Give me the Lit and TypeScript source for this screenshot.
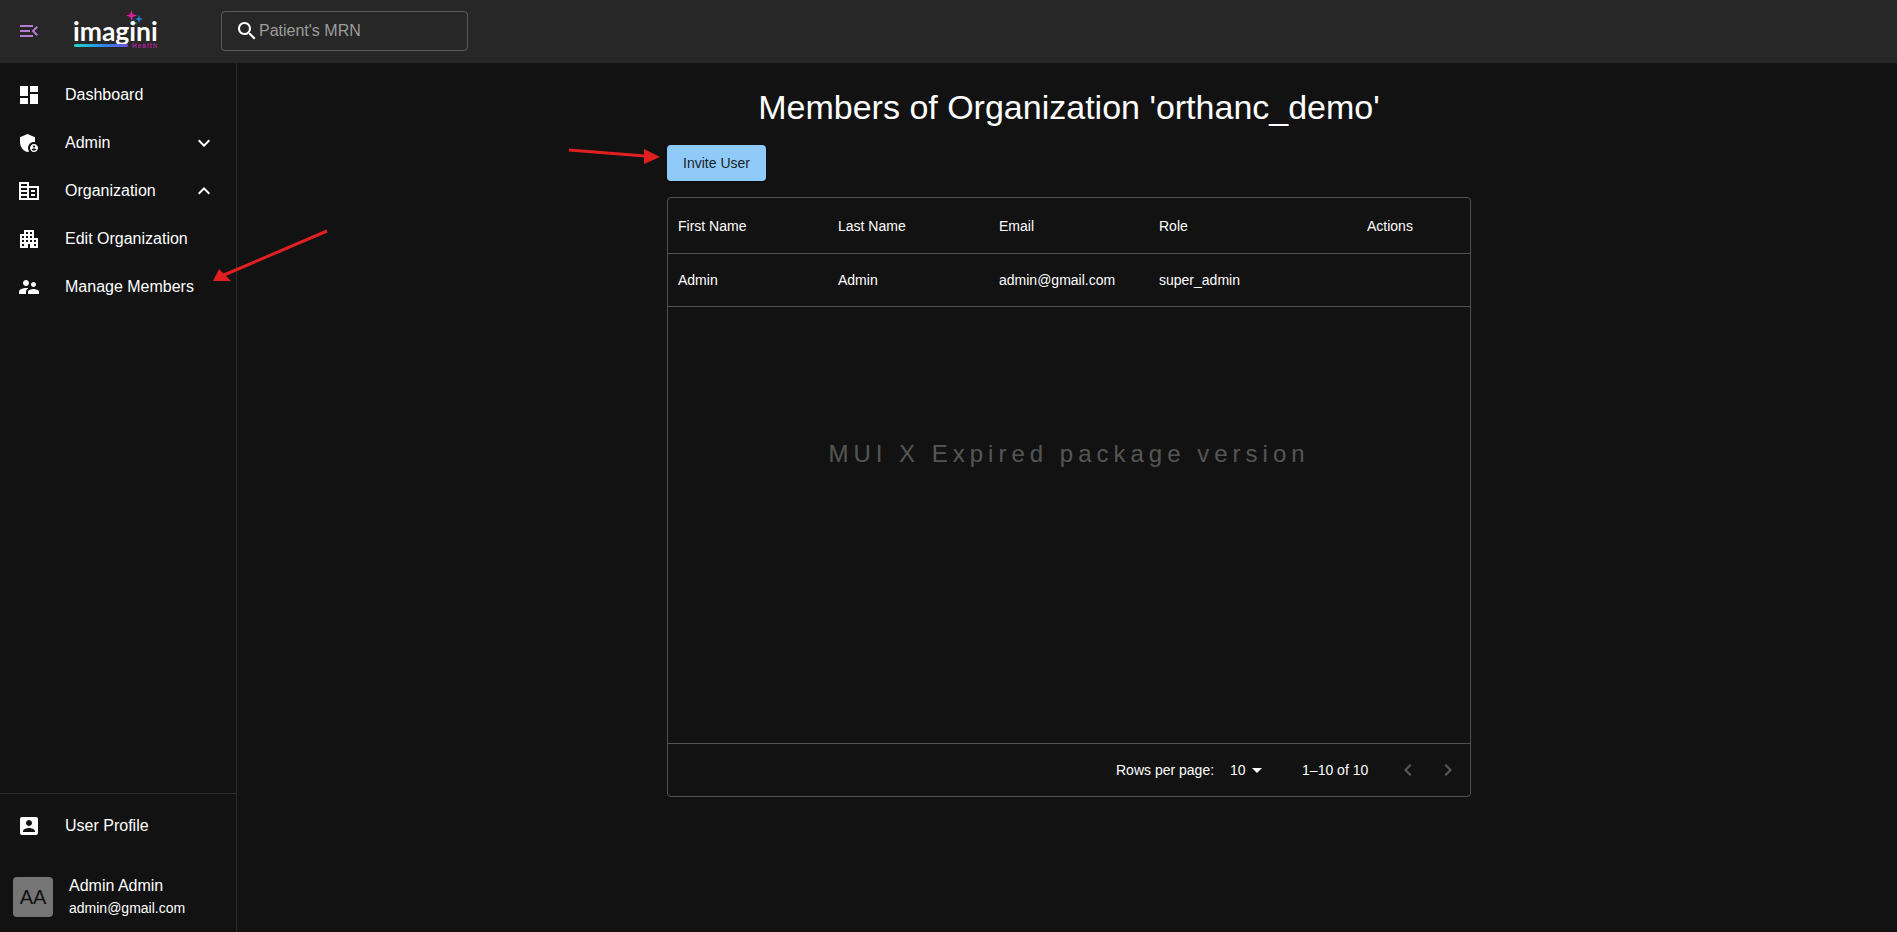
import { LitElement, html, css, svg } from 'lit';
import { customElement } from 'lit/decorators.js';

const ICONS: Record<string, string> = {
  menuOpen: 'M3 18h13v-2H3v2zm0-5h10v-2H3v2zm0-7v2h13V6H3zm18 9.59L17.42 12 21 8.41 19.59 7l-5 5 5 5L21 15.59z',
  search: 'M15.5 14h-.79l-.28-.27C15.41 12.59 16 11.11 16 9.5 16 5.91 13.09 3 9.5 3S3 5.91 3 9.5 5.91 16 9.5 16c1.61 0 3.09-.59 4.23-1.57l.27.28v.79l5 4.99L20.49 19l-4.99-5zm-6 0C7.01 14 5 11.99 5 9.5S7.01 5 9.5 5 14 7.01 14 9.5 11.99 14 9.5 14z',
  dashboard: 'M3 13h8V3H3v10zm0 8h8v-6H3v6zm10 0h8V11h-8v10zm0-18v6h8V3h-8z',
  admin: 'M17 11c.34 0 .67.04 1 .09V6.27L10.5 3 3 6.27v4.91c0 4.54 3.2 8.79 7.5 9.82.55-.13 1.08-.32 1.6-.55-.69-.98-1.1-2.17-1.1-3.45 0-3.31 2.69-6 6-6zM17 13c-2.21 0-4 1.79-4 4s1.79 4 4 4 4-1.79 4-4-1.79-4-4-4zm0 1.38c.62 0 1.12.51 1.12 1.12s-.51 1.12-1.12 1.12-1.12-.51-1.12-1.12.5-1.12 1.12-1.12zm0 5.37c-.93 0-1.74-.46-2.24-1.17.05-.72 1.51-1.08 2.24-1.08s2.19.36 2.24 1.08c-.5.71-1.31 1.17-2.24 1.17z',
  corporate: 'M12 7V3H2v18h20V7H12zm-2 12H4v-2h6v2zm0-4H4v-2h6v2zm0-4H4V9h6v2zm0-4H4V5h6v2zm10 12h-8V9h8v10zm-2-8h-4v2h4v-2zm0 4h-4v2h4v-2z',
  apartment: 'M17 11V3H7v4H3v14h8v-4h2v4h8V11h-4zM7 19H5v-2h2v2zm0-4H5v-2h2v2zm0-4H5V9h2v2zm4 4H9v-2h2v2zm0-4H9V9h2v2zm0-4H9V5h2v2zm4 8h-2v-2h2v2zm0-4h-2V9h2v2zm0-4h-2V5h2v2zm4 12h-2v-2h2v2zm0-4h-2v-2h2v2z',
  supervisor: 'M16.5 12c1.38 0 2.49-1.12 2.49-2.5S17.88 7 16.5 7C15.12 7 14 8.12 14 9.5s1.12 2.5 2.5 2.5zM9 11c1.66 0 2.99-1.34 2.99-3S10.66 5 9 5C7.34 5 6 6.34 6 8s1.34 3 3 3zm7.5 3c-1.83 0-5.5.92-5.5 2.75V19h11v-2.25c0-1.83-3.67-2.75-5.5-2.75zM9 13c-2.33 0-7 1.17-7 3.5V19h7v-2.25c0-.85.33-2.34 2.37-3.47C10.5 13.1 9.66 13 9 13z',
  accountBox: 'M3 5v14c0 1.1.89 2 2 2h14c1.1 0 2-.9 2-2V5c0-1.1-.9-2-2-2H5c-1.11 0-2 .9-2 2zm12 4c0 1.66-1.34 3-3 3s-3-1.34-3-3 1.34-3 3-3 3 1.34 3 3zm-9 8c0-2 4-3.1 6-3.1s6 1.1 6 3.1v1H6v-1z',
  expandMore: 'M16.59 8.59 12 13.17 7.41 8.59 6 10l6 6 6-6z',
  expandLess: 'm12 8-6 6 1.41 1.41L12 10.83l4.59 4.58L18 14z',
  chevronLeft: 'M15.41 7.41 14 6l-6 6 6 6 1.41-1.41L10.83 12z',
  chevronRight: 'M10 6 8.59 7.41 13.17 12l-4.58 4.59L10 18l6-6z',
  dropDown: 'm7 10 5 5 5-5z',
};

const icon = (name: string, cls = '') =>
  html`<svg class="icon ${cls}" viewBox="0 0 24 24"><path d=${ICONS[name]}></path></svg>`;

const star = (x: number, y: number, r: number, fill: string) => {
  const k = r * 0.25;
  const d = `M${x} ${y - r}L${x + k} ${y - k}L${x + r} ${y}L${x + k} ${y + k}L${x} ${y + r}L${x - k} ${y + k}L${x - r} ${y}L${x - k} ${y - k}Z`;
  return svg`<path d=${d} fill=${fill}></path>`;
};

const NAV = [
  { label: 'Dashboard', icon: 'dashboard' },
  { label: 'Admin', icon: 'admin', chevron: 'expandMore' },
  { label: 'Organization', icon: 'corporate', chevron: 'expandLess' },
  { label: 'Edit Organization', icon: 'apartment' },
  { label: 'Manage Members', icon: 'supervisor' },
];

const COLUMNS = ['First Name', 'Last Name', 'Email', 'Role', 'Actions'];
const ROW = ['Admin', 'Admin', 'admin@gmail.com', 'super_admin', ''];

@customElement('app-root')
export class AppRoot extends LitElement {
  static styles = css`
    :host {
      display: flex;
      flex-direction: column;
      position: relative;
      height: 932px;
      overflow: hidden;
      background: #121212;
      color: #fff;
      font-family: 'Liberation Sans', Arial, sans-serif;
    }
    .icon {
      width: 24px;
      height: 24px;
      fill: currentColor;
      flex: none;
      display: block;
    }

    .topbar {
      height: 63px;
      flex: none;
      box-sizing: border-box;
      display: flex;
      align-items: center;
      padding: 0 0 1px 17px;
      background: #272727;
    }
    .menu-btn {
      color: #b57bd1;
    }
    .logo {
      position: relative;
      width: 148px;
      margin-left: 32px;
      height: 40px;
      flex: none;
    }
    .logo-text {
      position: absolute;
      left: 0;
      top: 9px;
      font-family: Lato, 'Noto Sans', sans-serif;
      font-weight: 700;
      font-size: 26.5px;
      line-height: 23px;
    }
    .logo-bar {
      position: absolute;
      left: 1px;
      top: 33px;
      width: 54px;
      height: 3px;
      border-radius: 2px;
      background: linear-gradient(90deg, #1fd8c4, #2a8df0 50%, #6a4fe0);
    }
    .logo-sub {
      position: absolute;
      left: 59px;
      top: 32px;
      font-size: 6.5px;
      line-height: 6px;
      letter-spacing: 1px;
      font-weight: 700;
      color: #b0249a;
    }
    .logo-stars {
      position: absolute;
      left: 50px;
      top: -3px;
      width: 30px;
      height: 20px;
    }
    .search {
      width: 247px;
      height: 40px;
      box-sizing: border-box;
      border: 1px solid rgba(255, 255, 255, 0.23);
      border-radius: 4px;
      display: flex;
      align-items: center;
      padding-left: 13px;
      font-size: 16px;
      color: #9c9c9c;
    }
    .search .icon {
      color: #fff;
    }

    .body {
      flex: 1;
      display: flex;
      min-height: 0;
    }
    .sidebar {
      width: 237px;
      flex: none;
      box-sizing: border-box;
      border-right: 1px solid #2e2e2e;
      display: flex;
      flex-direction: column;
    }
    .nav {
      flex: 1;
      padding-top: 8px;
    }
    .item {
      height: 48px;
      display: flex;
      align-items: center;
      padding: 0 17px;
      font-size: 16px;
    }
    .item .label {
      margin-left: 24px;
      flex: 1;
      white-space: nowrap;
    }
    .item .chevron {
      margin-right: 3px;
    }
    .bottom {
      border-top: 1px solid #2e2e2e;
      padding-top: 8px;
    }
    .user {
      display: flex;
      align-items: center;
      gap: 16px;
      padding: 25px 13px 13px;
    }
    .avatar {
      width: 40px;
      height: 40px;
      border-radius: 4px;
      background: #757575;
      color: #121212;
      font-size: 20px;
      display: flex;
      align-items: center;
      justify-content: center;
      flex: none;
    }
    .user-name {
      font-size: 16px;
      line-height: 22px;
    }
    .user-mail {
      font-size: 14px;
      line-height: 22px;
    }

    .main {
      flex: 1;
      display: flex;
      flex-direction: column;
      align-items: center;
      padding: 23px 0 0 4px;
    }
    h1 {
      margin: 0;
      font-size: 34px;
      font-weight: 400;
      line-height: 42px;
    }
    .content {
      width: 804px;
      margin-top: 17px;
    }
    .invite {
      display: block;
      width: 99px;
      height: 36px;
      border: 0;
      padding: 0;
      border-radius: 4px;
      background: #90caf9;
      color: rgba(0, 0, 0, 0.87);
      font-family: inherit;
      font-size: 14px;
      box-shadow: 0 1px 3px rgba(0, 0, 0, 0.4);
    }

    .grid {
      margin-top: 16px;
      height: 600px;
      box-sizing: border-box;
      border: 1px solid #515151;
      border-radius: 4px;
      display: flex;
      flex-direction: column;
      font-size: 14px;
    }
    .cols {
      display: grid;
      grid-template-columns: 160px 161px 160px 208px 1fr;
      align-items: center;
      box-sizing: border-box;
      border-bottom: 1px solid #515151;
    }
    .cols span {
      padding-left: 10px;
    }
    .cols.head {
      height: 56px;
    }
    .cols.row {
      height: 53px;
    }
    /* the licence notice sits above the middle of the empty area */
    .watermark {
      flex: 1;
      display: flex;
      align-items: center;
      justify-content: center;
      font-size: 24px;
      letter-spacing: 5px;
      color: rgba(255, 255, 255, 0.3);
      padding-bottom: 143px;
      box-sizing: border-box;
    }
    .pager {
      height: 53px;
      flex: none;
      box-sizing: border-box;
      border-top: 1px solid #515151;
      display: flex;
      align-items: center;
      padding-left: 448px;
      white-space: nowrap;
    }
    .rows-value {
      margin-left: 16px;
      width: 18px;
    }
    .pager .caret {
      margin-left: -3px;
    }
    .range {
      margin-left: 33px;
      width: 66px;
    }
    .page-btn {
      color: rgba(255, 255, 255, 0.3);
    }
    .page-btn.prev {
      margin-left: 28px;
    }
    .page-btn.next {
      margin-left: 16px;
    }

    .annotations {
      position: absolute;
      inset: 0;
      width: 100%;
      height: 100%;
      pointer-events: none;
    }
  `;

  render() {
    return html`
      <header class="topbar">
        ${icon('menuOpen', 'menu-btn')}
        <div class="logo">
          <svg class="logo-stars" viewBox="0 0 30 20">
            ${star(8.5, 7.5, 5.5, '#d81fa0')}
            ${star(16, 11, 4, '#2a7fe8')}
            ${star(11, 15, 3.5, '#1fc8b8')}
          </svg>
          <span class="logo-text">imagini</span>
          <span class="logo-bar"></span>
          <span class="logo-sub">Health</span>
        </div>
        <div class="search">${icon('search')}<span>Patient's MRN</span></div>
      </header>
      <div class="body">
        <aside class="sidebar">
          <nav class="nav">
            ${NAV.map(
              (n) => html`
                <div class="item">
                  ${icon(n.icon)}
                  <span class="label">${n.label}</span>
                  ${n.chevron ? icon(n.chevron, 'chevron') : ''}
                </div>
              `
            )}
          </nav>
          <div class="bottom">
            <div class="item">
              ${icon('accountBox')}
              <span class="label">User Profile</span>
            </div>
            <div class="user">
              <div class="avatar">AA</div>
              <div>
                <div class="user-name">Admin Admin</div>
                <div class="user-mail">admin@gmail.com</div>
              </div>
            </div>
          </div>
        </aside>
        <main class="main">
          <h1>Members of Organization 'orthanc_demo'</h1>
          <div class="content">
            <button class="invite">Invite User</button>
            <div class="grid">
              <div class="cols head">${COLUMNS.map((c) => html`<span>${c}</span>`)}</div>
              <div class="cols row">${ROW.map((c) => html`<span>${c}</span>`)}</div>
              <div class="watermark">MUI X Expired package version</div>
              <div class="pager">
                <span>Rows per page:</span>
                <span class="rows-value">10</span>
                ${icon('dropDown', 'caret')}
                <span class="range">1–10 of 10</span>
                ${icon('chevronLeft', 'page-btn prev')}
                ${icon('chevronRight', 'page-btn next')}
              </div>
            </div>
          </div>
        </main>
      </div>
      <svg class="annotations" viewBox="0 0 1897 932">
        <path d="M327 231L224 275" stroke="#e02020" stroke-width="3" fill="none"></path>
        <path d="M213 281L219 269L231 281Z" fill="#e02020"></path>
        <path d="M569 150L645 156" stroke="#e02020" stroke-width="3" fill="none"></path>
        <path d="M660 157L644 149L644 164Z" fill="#e02020"></path>
      </svg>
    `;
  }
}
